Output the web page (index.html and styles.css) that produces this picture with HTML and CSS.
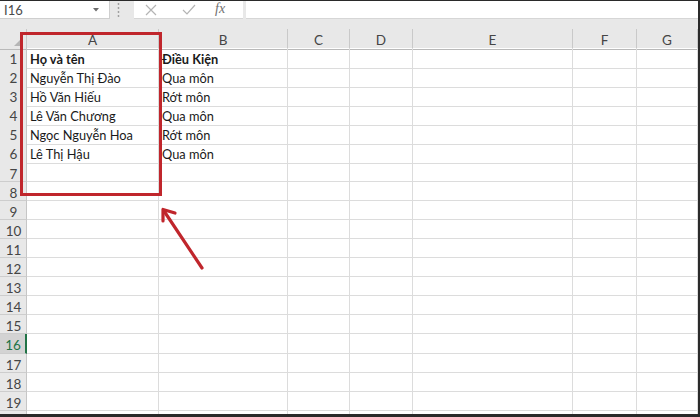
FILE: index.html
```html
<!DOCTYPE html>
<html lang="vi">
<head>
<meta charset="utf-8">
<title>Excel</title>
<link rel="stylesheet" href="styles.css">
</head>
<body>
<div class="frame">
  <div class="fbar">
    <div class="namebox">
      <span class="nb-text">I16</span>
      <svg class="caret" width="6" height="4" viewBox="0 0 6 4"><path d="M0 0H6L3 3.5Z" fill="#6b6b6b"/></svg>
    </div>
    <div class="grip">
      <svg width="3" height="16" viewBox="0 0 3 16"><circle cx="1.5" cy="2" r="0.9" fill="#9a9a9a"/><circle cx="1.5" cy="6" r="0.9" fill="#9a9a9a"/><circle cx="1.5" cy="10" r="0.9" fill="#9a9a9a"/><circle cx="1.5" cy="14" r="0.9" fill="#9a9a9a"/></svg>
    </div>
    <div class="fbtns">
      <svg class="btn-x" width="12" height="12" viewBox="0 0 12 12"><path d="M1 1L11 11M11 1L1 11" stroke="#b4b4b4" stroke-width="1.2" fill="none"/></svg>
      <svg class="btn-ok" width="14" height="11" viewBox="0 0 14 11"><path d="M1 6L5 10L13 1" stroke="#b4b4b4" stroke-width="1.2" fill="none"/></svg>
      <span class="fx">fx</span>
    </div>
    <div class="finput"></div>
  </div>
  <div class="gap"></div>
  <div class="sheet">
    <div class="row hdr"><div class="corner"><span class="tri"></span></div><div class="ch">A</div><div class="ch">B</div><div class="ch">C</div><div class="ch">D</div><div class="ch">E</div><div class="ch">F</div><div class="ch">G</div></div>
    <div class="row"><div class="rh">1</div><div class="c b">Họ và tên</div><div class="c b">Điều Kiện</div><div class="c"></div><div class="c"></div><div class="c"></div><div class="c"></div><div class="c"></div></div>
    <div class="row"><div class="rh">2</div><div class="c">Nguyễn Thị Đào</div><div class="c">Qua môn</div><div class="c"></div><div class="c"></div><div class="c"></div><div class="c"></div><div class="c"></div></div>
    <div class="row"><div class="rh">3</div><div class="c">Hồ Văn Hiếu</div><div class="c">Rớt môn</div><div class="c"></div><div class="c"></div><div class="c"></div><div class="c"></div><div class="c"></div></div>
    <div class="row"><div class="rh">4</div><div class="c">Lê Văn Chương</div><div class="c">Qua môn</div><div class="c"></div><div class="c"></div><div class="c"></div><div class="c"></div><div class="c"></div></div>
    <div class="row"><div class="rh">5</div><div class="c">Ngọc Nguyễn Hoa</div><div class="c">Rớt môn</div><div class="c"></div><div class="c"></div><div class="c"></div><div class="c"></div><div class="c"></div></div>
    <div class="row"><div class="rh">6</div><div class="c">Lê Thị Hậu</div><div class="c">Qua môn</div><div class="c"></div><div class="c"></div><div class="c"></div><div class="c"></div><div class="c"></div></div>
    <div class="row"><div class="rh">7</div><div class="c"></div><div class="c"></div><div class="c"></div><div class="c"></div><div class="c"></div><div class="c"></div><div class="c"></div></div>
    <div class="row"><div class="rh">8</div><div class="c"></div><div class="c"></div><div class="c"></div><div class="c"></div><div class="c"></div><div class="c"></div><div class="c"></div></div>
    <div class="row"><div class="rh">9</div><div class="c"></div><div class="c"></div><div class="c"></div><div class="c"></div><div class="c"></div><div class="c"></div><div class="c"></div></div>
    <div class="row"><div class="rh">10</div><div class="c"></div><div class="c"></div><div class="c"></div><div class="c"></div><div class="c"></div><div class="c"></div><div class="c"></div></div>
    <div class="row"><div class="rh">11</div><div class="c"></div><div class="c"></div><div class="c"></div><div class="c"></div><div class="c"></div><div class="c"></div><div class="c"></div></div>
    <div class="row"><div class="rh">12</div><div class="c"></div><div class="c"></div><div class="c"></div><div class="c"></div><div class="c"></div><div class="c"></div><div class="c"></div></div>
    <div class="row"><div class="rh">13</div><div class="c"></div><div class="c"></div><div class="c"></div><div class="c"></div><div class="c"></div><div class="c"></div><div class="c"></div></div>
    <div class="row"><div class="rh">14</div><div class="c"></div><div class="c"></div><div class="c"></div><div class="c"></div><div class="c"></div><div class="c"></div><div class="c"></div></div>
    <div class="row"><div class="rh">15</div><div class="c"></div><div class="c"></div><div class="c"></div><div class="c"></div><div class="c"></div><div class="c"></div><div class="c"></div></div>
    <div class="row"><div class="rh sel">16</div><div class="c"></div><div class="c"></div><div class="c"></div><div class="c"></div><div class="c"></div><div class="c"></div><div class="c"></div></div>
    <div class="row"><div class="rh">17</div><div class="c"></div><div class="c"></div><div class="c"></div><div class="c"></div><div class="c"></div><div class="c"></div><div class="c"></div></div>
    <div class="row"><div class="rh">18</div><div class="c"></div><div class="c"></div><div class="c"></div><div class="c"></div><div class="c"></div><div class="c"></div><div class="c"></div></div>
    <div class="row"><div class="rh">19</div><div class="c"></div><div class="c"></div><div class="c"></div><div class="c"></div><div class="c"></div><div class="c"></div><div class="c"></div></div>
    <div class="row"><div class="rh">20</div><div class="c"></div><div class="c"></div><div class="c"></div><div class="c"></div><div class="c"></div><div class="c"></div><div class="c"></div></div>
  </div>
  <div class="hl-box"></div>
  <svg class="arrow" width="60" height="75" viewBox="0 0 60 75">
    <path d="M52 68L14 11" stroke="#c0262c" stroke-width="3.2" stroke-linecap="round" fill="none"/>
    <path d="M25 13L13 9.5L13 21" stroke="#c0262c" stroke-width="3.2" stroke-linecap="round" stroke-linejoin="round" fill="none"/>
  </svg>
</div>
</body>
</html>
```

FILE: styles.css
```css
html, body {
  margin: 0;
  padding: 0;
  background: #ffffff;
}

.frame {
  position: relative;
  width: 700px;
  height: 417px;
  box-sizing: border-box;
  border-top: 1px solid #2a2a2a;
  border-right: 2px solid #2a2a2a;
  border-bottom: 3px solid #2a2a2a;
  overflow: hidden;
  background: #e8e8e8;
  display: flex;
  flex-direction: column;
  font-family: Lato, "Noto Sans", sans-serif;
}

/* formula bar */
.fbar {
  height: 18px;
  display: flex;
  flex: none;
  background: #e8e8e8;
}

.namebox {
  width: 110px;
  box-sizing: border-box;
  background: #ffffff;
  border-right: 1px solid #cfcfcf;
  border-bottom: 1px solid #cfcfcf;
  display: flex;
  align-items: center;
  justify-content: space-between;
  padding: 0 10px 0 4px;
}

.nb-text {
  font-size: 13px;
  color: #4a4a4a;
}

.caret {
  display: block;
}

.grip {
  width: 24px;
  display: flex;
  align-items: center;
  padding-left: 7px;
  box-sizing: border-box;
}

.grip svg {
  display: block;
}

.fbtns {
  width: 109px;
  background: #ffffff;
  border-bottom: 1px solid #d6d6d6;
  box-sizing: border-box;
  display: flex;
  align-items: center;
  padding-left: 11px;
}

.btn-x {
  display: block;
  margin-right: 25px;
}

.btn-ok {
  display: block;
  margin-right: 19px;
}

.fx {
  font-family: "Liberation Serif", "DejaVu Serif", serif;
  font-style: italic;
  font-size: 14px;
  color: #707070;
  line-height: 1;
  margin-top: -2px;
}

.finput {
  flex: 1;
  margin-left: 3px;
  background: #ffffff;
  border-bottom: 1px solid #d6d6d6;
}

.gap {
  height: 10px;
  flex: none;
}

/* sheet */
.sheet {
  flex: 1;
  background: #ffffff;
}

.row {
  display: grid;
  grid-template-columns: 27px 132px 129px 62px 63px 160px 64px 61px;
  height: 19.1px;
}

.row.hdr {
  height: 19px;
  background: #e8e8e8;
}

.corner {
  position: relative;
  border-right: 1px solid #c9c9c9;
  border-bottom: 1px solid #b9b9b9;
  box-sizing: border-box;
}

.tri {
  position: absolute;
  right: 4px;
  bottom: 3px;
  width: 0;
  height: 0;
  border-left: 8px solid transparent;
  border-bottom: 8px solid #b5b5b5;
}

.ch {
  box-sizing: border-box;
  border-right: 1px solid #c9c9c9;
  border-bottom: 1px solid #b9b9b9;
  text-align: center;
  font-size: 13.5px;
  line-height: 18px;
  padding-top: 2px;
  color: #454545;
}

.rh {
  box-sizing: border-box;
  background: #e8e8e8;
  border-right: 1px solid #c6c6c6;
  border-bottom: 1px solid #cdcdcd;
  text-align: center;
  font-size: 13.5px;
  line-height: 18px;
  padding-top: 2px;
  color: #454545;
  padding-left: 1px;
  overflow: hidden;
}

.rh.sel {
  background: #d3d3d3;
  color: #217346;
  border-right: 2px solid #217346;
}

.c {
  box-sizing: border-box;
  border-right: 1px solid #dcdcdc;
  border-bottom: 1px solid #dcdcdc;
  font-size: 12.8px;
  line-height: 18px;
  padding-top: 2px;
  color: #1a1a1a;
  padding-left: 3px;
  white-space: nowrap;
}

.c.b {
  font-weight: 700;
}

/* annotations */
.hl-box {
  position: absolute;
  left: 20px;
  top: 31px;
  width: 142px;
  height: 164px;
  box-sizing: border-box;
  border: 3px solid #c0262c;
}

.arrow {
  position: absolute;
  left: 150px;
  top: 199px;
  display: block;
}
```
